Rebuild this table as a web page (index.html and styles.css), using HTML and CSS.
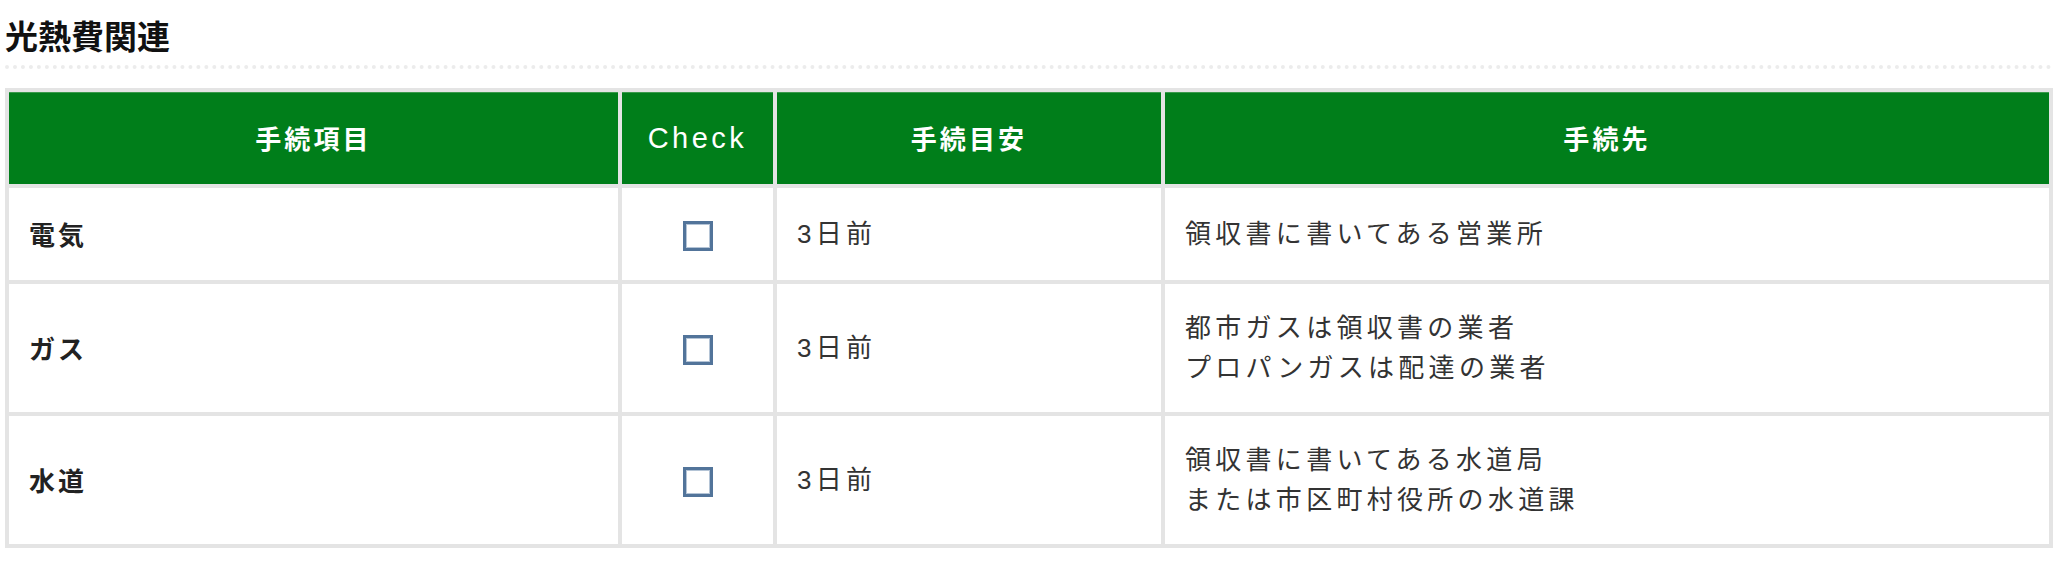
FILE: index.html
```html
<!DOCTYPE html>
<html lang="ja">
<head>
<meta charset="utf-8">
<title>光熱費関連</title>
<link rel="stylesheet" href="styles.css">
</head>
<body>
<div class="wrap">
  <h2 class="title">光熱費関連</h2>
  <table class="list">
    <thead>
      <tr>
        <th class="c1">手続項目</th>
        <th class="c2 latin">Check</th>
        <th class="c3">手続目安</th>
        <th class="c4">手続先</th>
      </tr>
    </thead>
    <tbody>
      <tr class="single">
        <td class="item">電気</td>
        <td class="chk"><span class="box"></span></td>
        <td>3日前</td>
        <td>領収書に書いてある営業所</td>
      </tr>
      <tr>
        <td class="item">ガス</td>
        <td class="chk"><span class="box"></span></td>
        <td>3日前</td>
        <td>都市ガスは領収書の業者<br>プロパンガスは配達の業者</td>
      </tr>
      <tr>
        <td class="item">水道</td>
        <td class="chk"><span class="box"></span></td>
        <td>3日前</td>
        <td>領収書に書いてある水道局<br>または市区町村役所の水道課</td>
      </tr>
    </tbody>
  </table>
</div>
</body>
</html>
```

FILE: styles.css
```css
html, body {
  margin: 0;
  padding: 0;
  background: #fff;
}
body {
  font-family: "Liberation Sans", "Noto Sans CJK JP", sans-serif;
  color: #333;
}
.wrap {
  padding: 0 7px 0 5px;
}
.title {
  margin: 0;
  padding: 13px 0 8px 0;
  font-family: "Noto Sans CJK JP", sans-serif;
  font-size: 33px;
  line-height: 44px;
  font-weight: 700;
  color: #111;
  border-bottom: 4px dotted #ececec;
}
.list {
  margin-top: 19px;
  width: 2048px;
  table-layout: fixed;
  border-collapse: separate;
  border-spacing: 0;
  border-left: 4px solid #e4e4e4;
  border-top: 4px solid #e4e4e4;
}
.list th,
.list td {
  box-sizing: border-box;
  border-right: 4px solid #e4e4e4;
  border-bottom: 4px solid #e4e4e4;
  vertical-align: middle;
}
.list th {
  background: #007e1a;
  box-shadow: inset 0 1px 0 #3a9a4c;
  color: #fff;
  font-family: "Noto Sans CJK JP", sans-serif;
  font-weight: 700;
  font-size: 26px;
  letter-spacing: 0.12em;
  line-height: 40px;
  padding: 26px 0;
  text-align: center;
}
.list th.latin {
  font-family: "Liberation Sans", sans-serif;
  font-weight: 400;
  font-size: 29px;
  letter-spacing: 0.12em;
}
.c1 { width: 613px; }
.c2 { width: 155px; }
.c3 { width: 388px; }
.c4 { width: 888px; }
.list td {
  font-size: 26px;
  line-height: 40px;
  letter-spacing: 0.165em;
  padding: 24px 20px;
  text-align: left;
  color: #333;
}
.list tr.single td {
  padding-top: 26px;
  padding-bottom: 26px;
}
.list td.item {
  font-family: "Noto Sans CJK JP", sans-serif;
  font-weight: 700;
  letter-spacing: 0.12em;
  color: #222;
}
.list td.chk {
  text-align: center;
  padding-left: 0;
  padding-right: 0;
  letter-spacing: 0;
}
.box {
  display: inline-block;
  box-sizing: border-box;
  width: 30px;
  height: 30px;
  border: 3px solid #52749a;
  box-shadow: inset 0 0 0 1px #b4c4d6;
  background: #fff;
  vertical-align: middle;
}
```
